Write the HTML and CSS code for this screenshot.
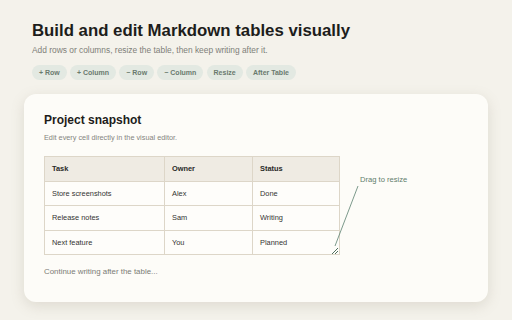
FILE: index.html
```html
<!DOCTYPE html>
<html lang="en">
<head>
  <meta charset="UTF-8">
  <title>Markdown tables</title>
  <link rel="stylesheet" href="styles.css">
</head>
<body>

<header class="intro">
  <h1>Build and edit Markdown tables visually</h1>
  <p class="lead">Add rows or columns, resize the table, then keep writing after it.</p>
  <div class="actions">
    <span class="pill">+ Row</span>
    <span class="pill">+ Column</span>
    <span class="pill">− Row</span>
    <span class="pill">− Column</span>
    <span class="pill">Resize</span>
    <span class="pill">After Table</span>
  </div>
</header>

<section class="card">
  <h2>Project snapshot</h2>
  <p class="hint">Edit every cell directly in the visual editor.</p>

  <div class="table-wrap">
    <table>
      <thead>
        <tr><th class="c1">Task</th><th class="c2">Owner</th><th>Status</th></tr>
      </thead>
      <tbody>
        <tr><td>Store screenshots</td><td>Alex</td><td>Done</td></tr>
        <tr><td>Release notes</td><td>Sam</td><td>Writing</td></tr>
        <tr><td>Next feature</td><td>You</td><td>Planned</td></tr>
      </tbody>
    </table>
    <svg class="grip" width="8" height="8" viewBox="0 0 8 8">
      <line x1="1" y1="7" x2="7" y2="1" />
      <line x1="4" y1="7" x2="7" y2="4" />
    </svg>
  </div>

  <p class="after">Continue writing after the table...</p>

  <!-- annotation -->
  <svg class="pointer" width="30" height="66" viewBox="0 0 30 66">
    <line x1="26" y1="1" x2="3" y2="61" />
  </svg>
  <span class="note">Drag to resize</span>
</section>

</body>
</html>
```

FILE: styles.css
```css
body {
  margin: 0;
  background: #f4f2eb;
  font-family: "Liberation Sans", Arial, sans-serif;
  color: #1d1d1b;
  height: 320px;
  overflow: hidden;
}

.intro {
  padding: 21px 32px 0;
}

h1 {
  margin: 0;
  font-size: 16.8px;
  font-weight: bold;
  line-height: 20px;
}

.lead {
  margin: 4px 0 0;
  font-size: 8.4px;
  line-height: 10px;
  color: #7f7f79;
}

.actions {
  display: flex;
  gap: 3.2px;
  margin-top: 10px;
}

.pill {
  display: inline-block;
  height: 15px;
  line-height: 15px;
  padding: 0 7px;
  border-radius: 8px;
  background: #e3e9e2;
  color: #6a7a6e;
  font-size: 7px;
  font-weight: bold;
}

.card {
  position: relative;
  margin: 14px 24px 0;
  height: 208px;
  box-sizing: border-box;
  padding: 19px 20px;
  background: #fdfcf8;
  border-radius: 12px;
  box-shadow: 0 4px 14px rgba(120, 110, 90, 0.18);
}

h2 {
  margin: 0;
  font-size: 12px;
  font-weight: bold;
  line-height: 14px;
  color: #1d1d1b;
}

.hint {
  margin: 6px 0 0;
  font-size: 7.3px;
  line-height: 9px;
  color: #85857f;
}

.table-wrap {
  position: relative;
  width: 296px;
  margin-top: 14px;
}

table {
  width: 296px;
  border-collapse: collapse;
  font-size: 7.4px;
  color: #333331;
}

th, td {
  border: 1px solid #ddd6c8;
  text-align: left;
  padding: 0 7px;
  height: 23.5px;
}

th {
  background: #efebe3;
  font-weight: bold;
  color: #2a2a28;
}

td {
  background: #fefdfa;
}

.c1 { width: 105px; }
.c2 { width: 73px; }

.grip {
  position: absolute;
  right: 1px;
  bottom: 0;
}

.grip line {
  stroke: #4f6f5d;
  stroke-width: 1;
}

.after {
  margin: 12px 0 0;
  font-size: 7.9px;
  color: #7b7b75;
}

.pointer {
  position: absolute;
  left: 308px;
  top: 91px;
}

.pointer line {
  stroke: #5c8070;
  stroke-width: 0.8;
}

.note {
  position: absolute;
  left: 336px;
  top: 81px;
  font-size: 7.6px;
  color: #5f7d6c;
}
```
